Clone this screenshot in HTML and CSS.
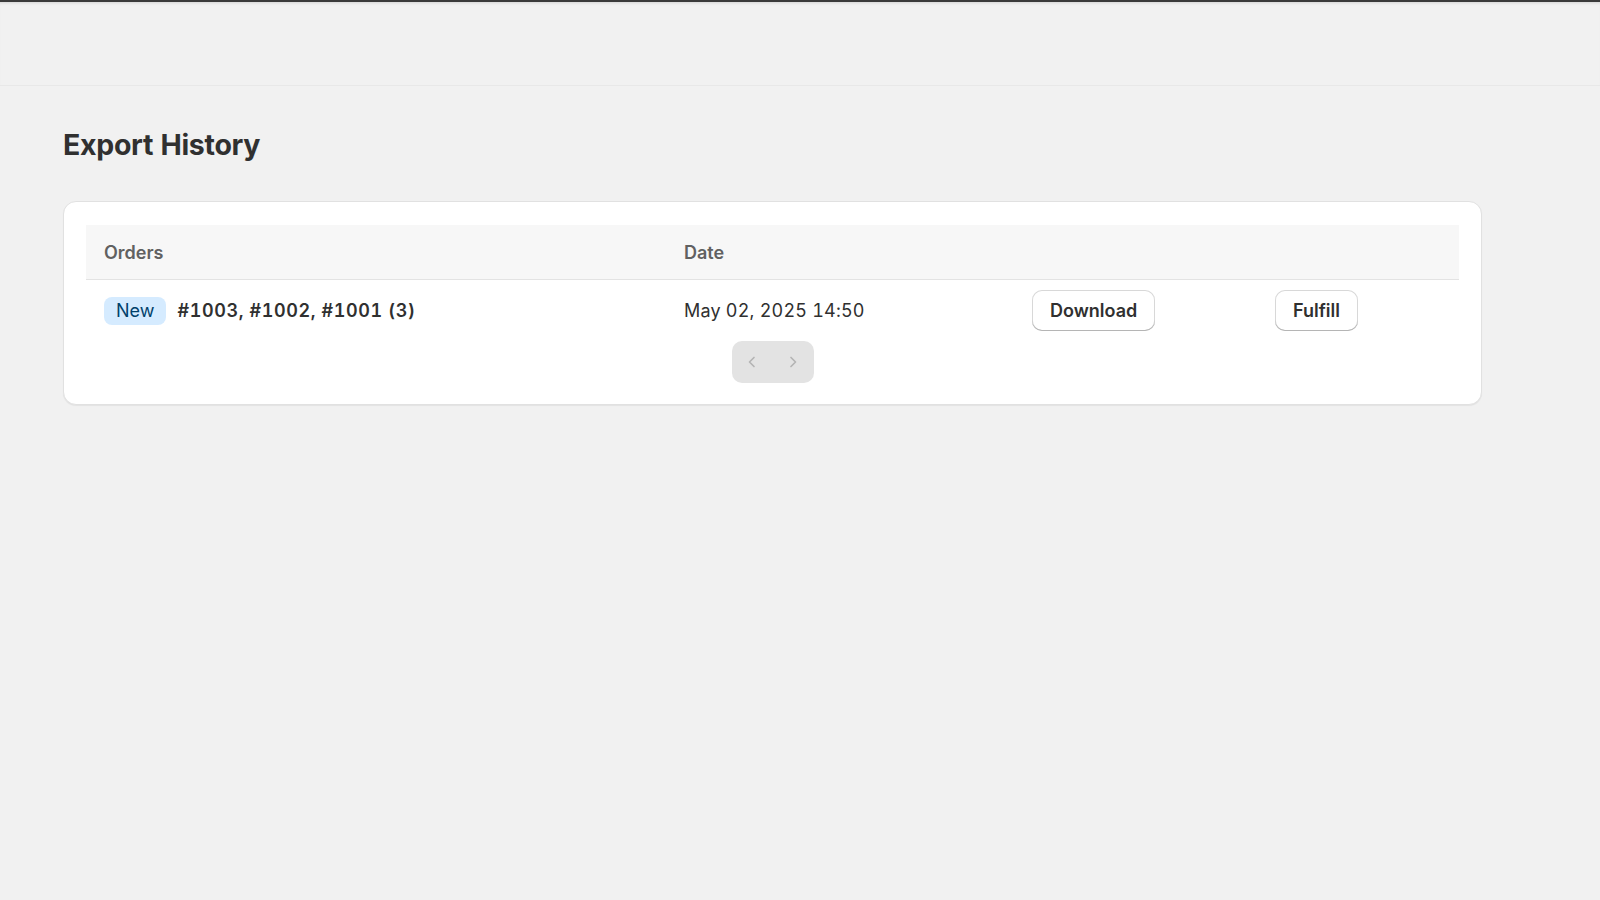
FILE: index.html
```html
<!DOCTYPE html>
<html lang="en">
<head>
    <meta charset="UTF-8">
    <meta name="viewport" content="width=device-width, initial-scale=1.0">
    <title>Export History</title>
    <link rel="stylesheet" href="styles.css">
</head>

<body>
    <header class="top-bar"></header>

    <main class="page">
        <h1 class="page-title">Export History</h1>

        <section class="card">
            <div class="table">
                <div class="table-head">
                    <div class="cell">Orders</div>
                    <div class="cell">Date</div>
                    <div class="cell"></div>
                    <div class="cell"></div>
                </div>
                <div class="table-row">
                    <div class="cell orders-cell">
                        <span class="badge">New</span>
                        <span class="order-list">#1003, #1002, #1001 (3)</span>
                    </div>
                    <div class="cell date-cell">May 02, 2025 14:50</div>
                    <div class="cell"><button class="btn">Download</button></div>
                    <div class="cell"><button class="btn">Fulfill</button></div>
                </div>
            </div>

            <div class="pager">
                <button class="pager-btn" disabled aria-label="Previous">
                    <svg width="20" height="20" viewBox="0 0 20 20"><path d="M12 5.5 L7.5 10 L12 14.5" fill="none" stroke="currentColor" stroke-width="1.7" stroke-linecap="round" stroke-linejoin="round"/></svg>
                </button>
                <button class="pager-btn" disabled aria-label="Next">
                    <svg width="20" height="20" viewBox="0 0 20 20"><path d="M8 5.5 L12.5 10 L8 14.5" fill="none" stroke="currentColor" stroke-width="1.7" stroke-linecap="round" stroke-linejoin="round"/></svg>
                </button>
            </div>
        </section>
    </main>
</body>

</html>
```

FILE: styles.css
```css
body {
    margin: 0;
    padding: 0;
    background-color: #f1f1f1;
    font-family: Inter, "Noto Sans", sans-serif;
    font-variant-numeric: tabular-nums;
    color: #303030;
}

.top-bar {
    height: 83px;
    border-top: 2px solid #3a3a3a;
    border-bottom: 1px solid #e8e8e8;
    box-shadow: inset 0 3px 3px -2px rgba(0, 0, 0, 0.12);
}

.page {
    padding: 0 118px 40px 63px;
}

.page-title {
    margin: 43px 0 40px;
    font-size: 28.5px;
    line-height: 32px;
    font-weight: 700;
    letter-spacing: -0.3px;
    color: #303030;
}

.card {
    background-color: #fff;
    border: 1px solid #e1e1e1;
    border-radius: 13px;
    padding: 23px 22px 21px;
    box-shadow: 0 1px 1px rgba(0, 0, 0, 0.06);
}

.table-head,
.table-row {
    display: grid;
    grid-template-columns: 580px 348px 243px 1fr;
    align-items: center;
}

.table-head {
    height: 54px;
    background-color: #f7f7f7;
    border-bottom: 1px solid #e3e3e3;
    font-size: 18px;
    font-weight: 600;
    color: #616161;
}

.table-row {
    height: 61px;
    font-size: 18px;
}

.cell {
    padding-left: 18px;
}

.orders-cell {
    display: flex;
    align-items: center;
    gap: 11px;
}

.badge {
    display: inline-block;
    height: 28px;
    line-height: 28px;
    padding: 0 12px;
    border-radius: 8px;
    background-color: #d5ebff;
    color: #00416b;
}

.order-list {
    font-weight: 600;
    letter-spacing: 0.6px;
    color: #303030;
}

.date-cell {
    letter-spacing: 0.2px;
}

.btn {
    height: 41px;
    padding: 0 18px;
    border: none;
    border-radius: 10px;
    background-color: #fff;
    font-family: inherit;
    font-size: 18px;
    font-weight: 600;
    color: #303030;
    cursor: pointer;
    box-shadow: inset 0 -1px 0 #b5b5b5, inset 0 0 0 1px #d8d8d8;
}

.btn:hover {
    background-color: #f7f7f7;
}

.pager {
    display: flex;
    justify-content: center;
}

.pager-btn {
    width: 41px;
    height: 42px;
    border: none;
    padding: 0;
    background-color: #e3e3e3;
    color: #b5b5b5;
    display: flex;
    align-items: center;
    justify-content: center;
}

.pager-btn:first-child {
    border-radius: 10px 0 0 10px;
}

.pager-btn:last-child {
    border-radius: 0 10px 10px 0;
}
```
